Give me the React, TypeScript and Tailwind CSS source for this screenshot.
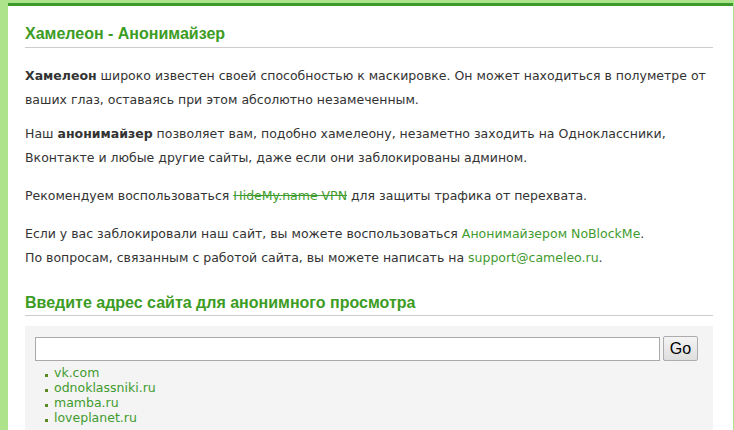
import React, { useState } from 'react';

const sites = ['vk.com', 'odnoklassniki.ru', 'mamba.ru', 'loveplanet.ru'];

const App: React.FC = () => {
  const [url, setUrl] = useState('');

  return (
    <div className="min-h-screen bg-[#ade38a] pl-[8px] pt-[3px] pr-[1px]">
      <div className="min-h-[427px] bg-white border-t-[3px] border-[#3a9a2b] px-[17px] pr-[20px] pt-[18px] font-['DejaVu_Sans',sans-serif] text-[12.5px] text-[#333]">
        {/* Intro */}
        <h1 className="font-['Liberation_Sans',Arial,sans-serif] font-bold text-[16px] leading-[20px] text-[#3c9c24] pb-[3px] border-b border-[#cccccc]">
          Хамелеон - Анонимайзер
        </h1>

        <div className="pt-[16px] leading-[24px]">
          <p>
            <b>Хамелеон</b> широко известен своей способностью к маскировке. Он может находиться в полуметре от ваших глаз, оставаясь при этом абсолютно незамеченным.
          </p>
          <p className="mt-[10px]">
            Наш <b>анонимайзер</b> позволяет вам, подобно хамелеону, незаметно заходить на Одноклассники, Вконтакте и любые другие сайты, даже если они заблокированы админом.
          </p>
          <p className="mt-[14px]">
            Рекомендуем воспользоваться <a href="#" className="text-[#3f9b2e] line-through">HideMy.name VPN</a> для защиты трафика от перехвата.
          </p>
          <p className="mt-[14px]">
            Если у вас заблокировали наш сайт, вы можете воспользоваться <a href="#" className="text-[#3f9b2e]">Анонимайзером NoBlockMe</a>.
            <br />
            По вопросам, связанным с работой сайта, вы можете написать на <a href="#" className="text-[#3f9b2e]">support@cameleo.ru</a>.
          </p>
        </div>

        {/* Form */}
        <h2 className="mt-[23px] font-['Liberation_Sans',Arial,sans-serif] font-bold text-[16px] leading-[20px] text-[#3c9c24] pb-[2px] border-b border-[#cccccc]">
          Введите адрес сайта для анонимного просмотра
        </h2>

        <div className="mt-[10px] bg-[#f4f4f4] px-[10px] pt-[10px] pb-[12px]">
          <div className="flex items-center gap-[3px]">
            <input
              type="text"
              value={url}
              onChange={(e) => setUrl(e.target.value)}
              className="w-[625px] h-[24px] bg-white border border-[#a9a9a9] px-1 outline-none text-[13px]"
            />
            <button className="h-[25px] w-[35px] border border-[#adadad] rounded-[2px] bg-gradient-to-b from-[#f4f4f4] to-[#dedede] font-['Liberation_Sans',Arial,sans-serif] text-[16px] text-black">
              Go
            </button>
          </div>
          <ul className="mt-[4px] pl-[10px] leading-[15px] text-[12.5px]">
            {sites.map((s) => (
              <li key={s} className="flex items-center gap-[6px]">
                <span className="w-[3px] h-[3px] bg-[#5a8a1e] mt-[6px]" />
                <a href="#" className="text-[#3f9b2e]">{s}</a>
              </li>
            ))}
          </ul>
        </div>
      </div>
    </div>
  );
};

export default App;
